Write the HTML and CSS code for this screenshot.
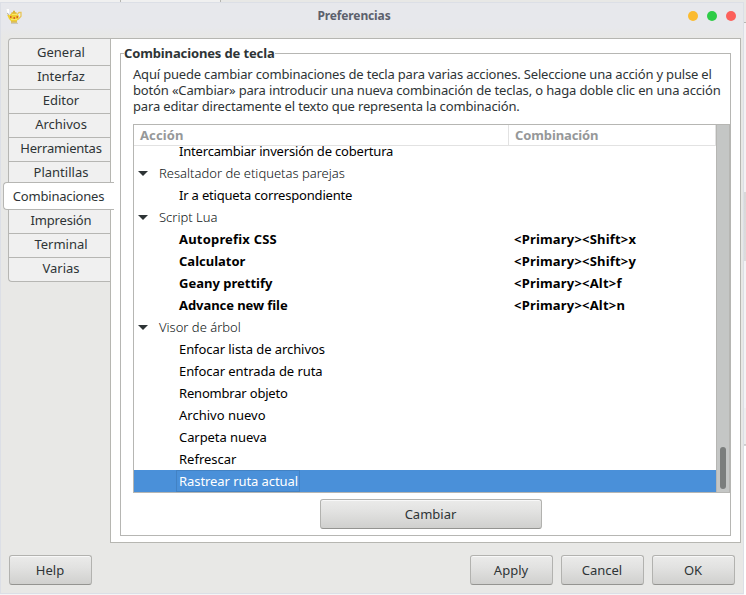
FILE: index.html
```html
<!DOCTYPE html>
<html lang="es">
<head>
<meta charset="utf-8">
<title>Preferencias</title>
<link rel="stylesheet" href="styles.css">
</head>
<body>
<div class="backdrop"></div>
<main class="window">
  <header class="titlebar">
    <svg class="lamp" width="17" height="17" viewBox="0 0 17 17">
      <path d="M11.5 6l1.5-1.5h2v3.8L12 11.5" fill="none" stroke="#e8c65a" stroke-width="1.3"/>
      <path d="M1 6.5l2.5.7Q5 4.5 8 4.5T13 8q0 3-2.5 5.5h-5L3 11z" fill="#f0cf32"/>
      <path d="M5.5 4.8h5M7 3.5h2M5 14h6" stroke="#dcb53c" stroke-width="1.3"/>
      <path d="M6 6.5h5M5 11.5h6" stroke="#f8e66b"/>
      <path d="M4 8h1.5v2H4zM7.5 9H9v2H7.5zM10.5 8H12v2h-1.5z" fill="#d86325"/>
      <path d="M.5 1H3v4H1.5z" fill="#fff"/><path d="M1 5l2 2" stroke="#b7b7b4"/>
      <path d="M5 15.3h7" stroke="#c5c1b5"/>
    </svg>
    <h1>Preferencias</h1>
    <div class="controls"><i class="min"></i><i class="max"></i><i class="close"></i></div>
  </header>
  <div class="notebook">
    <nav class="tabs">
      <div class="tab first"><span>General</span></div>
      <div class="tab"><span>Interfaz</span></div>
      <div class="tab"><span>Editor</span></div>
      <div class="tab"><span>Archivos</span></div>
      <div class="tab"><span class="tight">Herramientas</span></div>
      <div class="tab before"><span>Plantillas</span></div>
      <div class="tab active"><span class="tight">Combinaciones</span></div>
      <div class="tab after"><span class="tight">Impresión</span></div>
      <div class="tab"><span>Terminal</span></div>
      <div class="tab last"><span>Varias</span></div>
    </nav>
    <section class="page">
      <fieldset class="frame">
        <legend><span class="legend">Combinaciones de tecla</span></legend>
        <p class="intro"><span class="line-first">Aquí puede cambiar combinaciones de tecla para varias acciones. Seleccione una acción y pulse el</span><br><span>botón «Cambiar» para introducir una nueva combinación de teclas, o haga doble clic en una acción</span><br><span>para editar directamente el texto que representa la combinación.</span></p>
        <div class="tree">
          <div class="list">
            <div class="head"><div class="c1">Acción</div><div class="c2">Combinación</div></div>
            <div class="rows">
              <div class="row clipped"><span class="tight">Intercambiar inversión de cobertura</span></div>
              <div class="row group"><b class="arrow"></b><span>Resaltador de etiquetas parejas</span></div>
              <div class="row"><span class="tight">Ir a etiqueta correspondiente</span></div>
              <div class="row group"><b class="arrow"></b><span>Script Lua</span></div>
              <div class="row bold"><span class="wide">Autoprefix CSS</span><span class="wide">&lt;Primary&gt;&lt;Shift&gt;x</span></div>
              <div class="row bold"><span>Calculator</span><span class="wide">&lt;Primary&gt;&lt;Shift&gt;y</span></div>
              <div class="row bold"><span>Geany prettify</span><span class="wide">&lt;Primary&gt;&lt;Alt&gt;f</span></div>
              <div class="row bold"><span class="snug">Advance new file</span><span class="wide">&lt;Primary&gt;&lt;Alt&gt;n</span></div>
              <div class="row group"><b class="arrow"></b><span>Visor de árbol</span></div>
              <div class="row"><span class="snug">Enfocar lista de archivos</span></div>
              <div class="row"><span class="snug">Enfocar entrada de ruta</span></div>
              <div class="row"><span class="tight">Renombrar objeto</span></div>
              <div class="row"><span>Archivo nuevo</span></div>
              <div class="row"><span class="snug">Carpeta nueva</span></div>
              <div class="row"><span>Refrescar</span></div>
              <div class="row selected"><div class="focus"><span class="snug">Rastrear ruta actual</span></div></div>
            </div>
          </div>
          <div class="scroll"><div class="thumb"></div></div>
        </div>
        <button class="btn change">Cambiar</button>
      </fieldset>
    </section>
  </div>
  <footer class="actions">
    <button class="btn help">Help</button>
    <button class="btn">Apply</button>
    <button class="btn">Cancel</button>
    <button class="btn">OK</button>
  </footer>
</main>
<aside class="edge"></aside>
</body>
</html>
```
FILE: styles.css
```css
* { box-sizing: border-box; }
body { margin: 0; width: 746px; height: 595px; overflow: hidden; background: #f5f5f6; color: #2e3436; font: 13px/16px "Noto Sans", sans-serif; display: grid; grid-template: 2px 593px / 744px 2px; }
span { white-space: nowrap; }
.tight { letter-spacing: -.19px; }
.snug { letter-spacing: -.07px; }
.wide { letter-spacing: .19px; }
.backdrop { grid-column: 1 / 3; background: linear-gradient(90deg, #f0f0f0 120px, #b5b5b1 120px, #b5b5b1 121px, #f0f0f0 121px, #f0f0f0 220px, #b5b5b1 220px, #b5b5b1 221px, #e8e8e6 221px); }
.window { border: 1px solid #dcdfe6; background: #e8e8e6; height: 592px; display: flex; flex-direction: column; }
.titlebar { height: 35px; padding: 0 7px 0 5px; display: grid; grid-template-columns: 50px 1fr 50px; background: linear-gradient(#e7e8ec 24px, #e8e8e6 34px); }
.lamp { margin-top: 5px; }
h1 { margin: 5px 0 0; padding-right: 34px; text-align: center; font-size: 12px; line-height: 16px; letter-spacing: -.13px; color: #5c616c; }
.controls { display: flex; gap: 9px; justify-content: flex-end; padding-top: 8px; }
.controls i { width: 10px; height: 10px; flex: none; border-radius: 50%; }
.min { background: #fbbb2f; }
.max { background: #2ecc47; }
.close { background: #fc605b; }
.notebook { height: 505px; display: flex; padding-left: 2px; }
.tabs { width: 107px; display: flex; flex-direction: column; padding-left: 5px; }
.tab { height: 24px; flex: none; background: #f0f0f0; border: 1px solid #b6b6b3; border-width: 0 0 1px 1px; display: flex; justify-content: center; align-items: center; padding: 0 0 4px 3px; }
.first { height: 28px; border-top-width: 1px; border-radius: 4px 0 0; padding-bottom: 0; }
.before { height: 20px; border-bottom: 0; padding-bottom: 0; }
.active { height: 28px; margin-left: -5px; margin-right: -4px; position: relative; background: #fff; border-top-width: 1px; border-radius: 4px 0 0 4px; padding: 0 3px 0 2px; }
.after { height: 24px; padding-bottom: 4px; }
.last { border-radius: 0 0 0 4px; }
.page { width: 631px; border: 1px solid #b6b6b1; background: #fff; padding: 7px 9px 0; }
.frame { border: 1px solid #b6b6b3; margin: 0; padding: 0 0 0 12px; height: 490px; min-width: 0; }
.frame legend { margin-left: -9px; padding: 0; line-height: 15px; font-weight: 700; height: 15px; letter-spacing: -.13px; }
.intro { margin: 5px 0 10px; line-height: 16px; height: 48px; letter-spacing: -.155px; }
.line-first { letter-spacing: -.185px; }
.tree { border: 1px solid #b6b6b3; border-right: 0; height: 369px; display: flex; color: #000; }
.list { width: 582px; }
.head { height: 21px; border-bottom: 1px solid #e2e2e2; border-right: 1px solid #e2e2e2; color: #969899; font-weight: 700; display: flex; letter-spacing: -.12px; }
.head div { padding: 2px 0 0 6px; }
.head .c1 { width: 375px; border-right: 1px solid #e2e2e2; letter-spacing: .1px; }
.row { height: 22px; display: grid; grid-template-columns: 335px auto; padding: 3px 0 0 45px; line-height: 16px; }
.clipped { height: 16px; padding-top: 0; line-height: 10px; }
.group { grid-template-columns: 20px auto; padding-left: 5px; color: #0c1214; font-weight: 300; }
.arrow { border: solid transparent; border-width: 5px 5px 0; border-top-color: #2e3436; width: 0; height: 0; margin: 6px 0 0 -1px; }
.bold { font-weight: 700; }
.selected { background: #4a90d9; color: #fff; display: block; padding: 0 0 0 42px; }
.focus { width: 124px; height: 22px; border: 1px solid #4282c4; padding: 2px 0 0 2px; }
.scroll { width: 14px; background: #c4c6c5; border: 1px solid #b6b6b3; border-width: 0 1px; padding: 322px 0 0 3px; }
.thumb { width: 6px; height: 42px; border-radius: 3px; background: #7b7e7d; }
.btn { font: inherit; color: inherit; width: 83px; height: 30px; padding: 0 1px 0 0; border: 1px solid #b2b2af; border-bottom-color: #949491; border-radius: 3px; background: linear-gradient(#ebebea, #e2e2e1 40%, #d0d0ce); box-shadow: inset 0 1px #f8f8f8; display: flex; align-items: center; justify-content: center; }
.change { width: 222px; margin: 6px 0 0 187px; }
.actions { display: flex; gap: 8px; padding: 12px 8px 0; }
.help { margin-right: auto; }
.edge { background: linear-gradient(#e8e8e6 20px, #b6b6b3 20px, #b6b6b3 21px, #f4f1f3 21px, #f4f1f3 190px, #d9d9d9 190px, #dcdcdc 259px, #f3f3f5 259px, #f3f3f5 406px, #eee 406px, #eee 442px, #aaa 443px, #fff 444px); }
```
